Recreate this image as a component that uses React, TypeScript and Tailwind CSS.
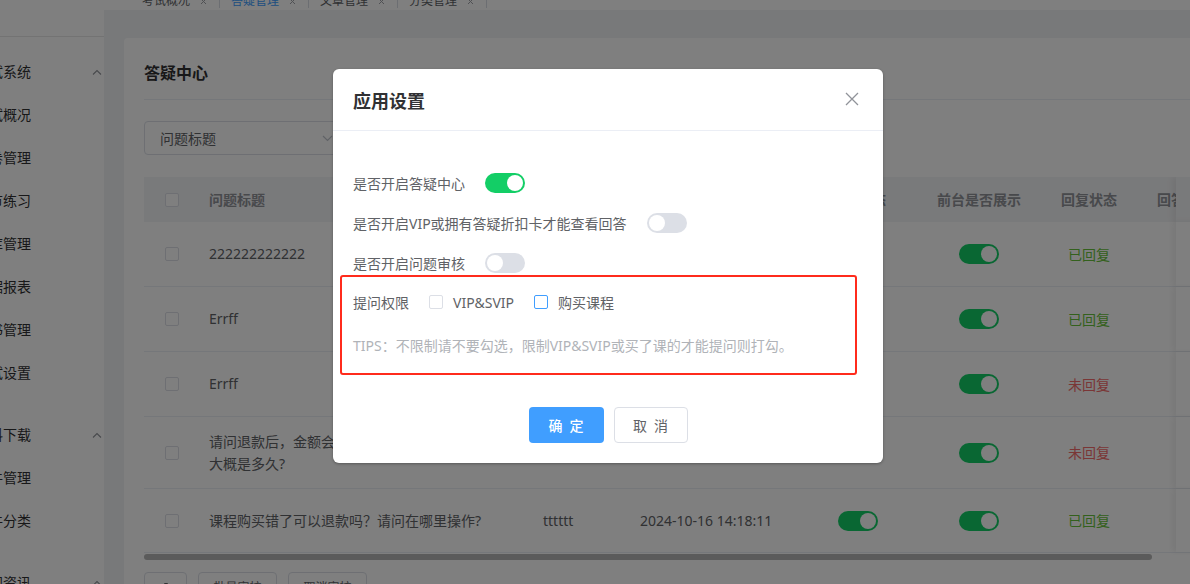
import React from "react";

function Switch({ on }: { on: boolean }) {
  return (
    <span
      className={
        on
          ? "inline-flex h-[20px] w-[40px] shrink-0 items-center justify-end rounded-full bg-[#13ce66] p-[2px]"
          : "inline-flex h-[20px] w-[40px] shrink-0 items-center justify-start rounded-full bg-[#dcdfe6] p-[2px]"
      }
    >
      <span className="h-[16px] w-[16px] rounded-full bg-white" />
    </span>
  );
}

function Box({ blue }: { blue?: boolean }) {
  return (
    <span
      className={
        blue
          ? "inline-block h-[14px] w-[14px] shrink-0 rounded-[2px] border border-[#409eff] bg-white"
          : "inline-block h-[14px] w-[14px] shrink-0 rounded-[2px] border border-[#dcdfe6] bg-white"
      }
    />
  );
}

function ChevronUp() {
  return (
    <svg width="10" height="6" viewBox="0 0 10 6" className="ml-auto mr-[2px]">
      <path d="M1 5.5 L5 1.5 L9 5.5" fill="none" stroke="#909399" strokeWidth="1.1" />
    </svg>
  );
}

function SideItem({ label, chevron }: { label: string; chevron?: boolean }) {
  return (
    <div className="flex h-[43px] items-center">
      <span className="ml-[-25px] whitespace-nowrap text-[14px] text-[#303133]">{label}</span>
      {chevron ? <ChevronUp /> : null}
    </div>
  );
}

function Tab({ label, active }: { label: string; active?: boolean }) {
  return (
    <div className="flex h-[14px] items-center border-r border-[#d8dce5] pl-[11px] pr-[12px]">
      <span
        className={
          active
            ? "w-[48px] whitespace-nowrap text-[12px] leading-[14px] text-[#409eff]"
            : "w-[48px] whitespace-nowrap text-[12px] leading-[14px] text-[#606266]"
        }
      >
        {label}
      </span>
      <svg width="7" height="7" viewBox="0 0 7 7" className="ml-[10px]">
        <path d="M1 1 L6 6 M6 1 L1 6" stroke="#a0a3a8" strokeWidth="1" />
      </svg>
    </div>
  );
}

type Row = {
  title: React.ReactNode;
  who: string;
  time: string;
  replied: boolean;
  h: string;
};

const rows: Row[] = [
  { title: "222222222222", who: "tttttt", time: "2024-10-18 09:12:45", replied: true, h: "h-[65px]" },
  { title: "Errff", who: "tttttt", time: "2024-10-17 16:40:02", replied: true, h: "h-[65px]" },
  { title: "Errff", who: "tttttt", time: "2024-10-17 16:38:27", replied: false, h: "h-[65px]" },
  {
    title: (
      <>
        请问退款后，金额会原路退回吗？退款到账时间
        <br />
        大概是多久?
      </>
    ),
    who: "tttttt",
    time: "2024-10-16 14:20:36",
    replied: false,
    h: "h-[72px]",
  },
  {
    title: "课程购买错了可以退款吗？请问在哪里操作?",
    who: "tttttt",
    time: "2024-10-16 14:18:11",
    replied: true,
    h: "h-[64px]",
  },
];

export default function App() {
  return (
    <div className="relative h-[584px] w-[1190px] overflow-hidden bg-white font-['Noto_Sans','Noto_Sans_CJK_SC',sans-serif]">
      <div className="flex h-full w-full">
        {/* Sidebar */}
        <aside className="h-full w-[104px] shrink-0 overflow-hidden bg-white">
          <div className="h-[37px] border-b border-[#e6e6e6]" />
          <div className="mt-[13px]">
            <SideItem label="考试系统" chevron />
            <SideItem label="考试概况" />
            <SideItem label="试卷管理" />
            <SideItem label="章节练习" />
            <SideItem label="题库管理" />
            <SideItem label="数据报表" />
            <SideItem label="证书管理" />
            <SideItem label="考试设置" />
          </div>
          <div className="mt-[19px]">
            <SideItem label="资料下载" chevron />
            <SideItem label="文件管理" />
            <SideItem label="文件分类" />
          </div>
          <div className="mt-[19px]">
            <SideItem label="新闻资讯" chevron />
          </div>
        </aside>

        {/* Main */}
        <main className="flex min-w-0 flex-1 flex-col bg-[#f0f2f5]">
          <div className="flex h-[10px] shrink-0 items-start bg-white pl-[27px]">
            <div className="mt-[-6px] flex">
              <Tab label="考试概况" />
              <Tab label="答疑管理" active />
              <Tab label="文章管理" />
              <Tab label="分类管理" />
            </div>
          </div>

          <div className="ml-[20px] mt-[28px] w-[1100px] shrink-0 rounded-[4px] bg-white px-[20px] pt-[23px]">
            <div className="border-b border-[#ebeef5] pb-[14px] text-[16px] font-bold leading-[24px] text-[#303133]">
              答疑中心
            </div>

            <div className="mt-[21px] flex h-[34px] w-[200px] items-center justify-between rounded-[4px] border border-[#dcdfe6] pl-[15px] pr-[10px]">
              <span className="text-[14px] text-[#606266]">问题标题</span>
              <svg width="11" height="7" viewBox="0 0 11 7">
                <path d="M1 1 L5.5 5.5 L10 1" fill="none" stroke="#c0c4cc" strokeWidth="1.2" />
              </svg>
            </div>

            {/* Table */}
            <div className="mt-[22px] w-[1060px] overflow-hidden text-[14px]">
              <div className="flex h-[45px] items-center bg-[#f3f4f6] font-bold text-[#909399]">
                <div className="flex w-[65px] shrink-0 pl-[21px]">
                  <Box />
                </div>
                <div className="w-[334px] shrink-0">问题标题</div>
                <div className="w-[97px] shrink-0">提问人</div>
                <div className="w-[158px] shrink-0">提问时间</div>
                <div className="w-[120px] shrink-0 text-center">审核状态</div>
                <div className="w-[122px] shrink-0 text-center">前台是否展示</div>
                <div className="w-[98px] shrink-0 text-center">回复状态</div>
                <div className="w-[38px] shrink-0 overflow-hidden whitespace-nowrap pl-[19px]">回答内容</div>
                <div className="flex h-full w-[140px] shrink-0 items-center bg-[#f3f4f6] pl-[40px] shadow-[-4px_0_6px_rgba(0,0,0,0.06)]">
                  操作
                </div>
              </div>
              {rows.map((r, i) => (
                <div key={i} className={`flex items-center border-b border-[#ebeef5] text-[#606266] ${r.h}`}>
                  <div className="flex w-[65px] shrink-0 pl-[21px]">
                    <Box />
                  </div>
                  <div className="w-[334px] shrink-0 leading-[22px]">{r.title}</div>
                  <div className="w-[97px] shrink-0">{r.who}</div>
                  <div className="w-[158px] shrink-0 whitespace-nowrap">{r.time}</div>
                  <div className="flex w-[120px] shrink-0 justify-center">
                    <Switch on />
                  </div>
                  <div className="flex w-[122px] shrink-0 justify-center">
                    <Switch on />
                  </div>
                  <div
                    className={
                      r.replied
                        ? "w-[98px] shrink-0 text-center text-[#67c23a]"
                        : "w-[98px] shrink-0 text-center text-[#f56c6c]"
                    }
                  >
                    {r.replied ? "已回复" : "未回复"}
                  </div>
                  <div className="w-[38px] shrink-0" />
                  <div className="flex h-full w-[140px] shrink-0 items-center bg-white pl-[40px] text-[#409eff] shadow-[-4px_0_6px_rgba(0,0,0,0.06)]">
                    回复
                  </div>
                </div>
              ))}
              <div className="mt-[1px] flex h-[6px] items-center">
                <div className="h-[6px] w-[1008px] rounded-full bg-[#b6b6b6]" />
              </div>
            </div>

            <div className="mt-[12px] flex gap-[11px]">
              <div className="flex h-[32px] w-[43px] items-center justify-center rounded-[4px] border border-[#dcdfe6]">
                <svg width="12" height="12" viewBox="0 0 12 12">
                  <path d="M1 3 H11 M4.5 3 V1.5 H7.5 V3 M2.5 3 L3 11 H9 L9.5 3" fill="none" stroke="#606266" strokeWidth="1" />
                </svg>
              </div>
              <div className="flex h-[32px] w-[79px] items-center justify-center rounded-[4px] border border-[#dcdfe6] text-[12px] text-[#606266]">
                批量审核
              </div>
              <div className="flex h-[32px] w-[79px] items-center justify-center rounded-[4px] border border-[#dcdfe6] text-[12px] text-[#606266]">
                取消审核
              </div>
            </div>
            <div className="h-[40px]" />
          </div>
        </main>
      </div>

      {/* Overlay + dialog */}
      <div className="absolute inset-0 bg-black/50">
        <div className="relative ml-[333px] mt-[69px] w-[550px] rounded-[6px] bg-white shadow-[0_1px_3px_rgba(0,0,0,0.3)]">
          <div className="relative border-b border-[#ebeef5] px-[20px] pb-[17px] pt-[20px]">
            <div className="text-[18px] font-bold leading-[24px] text-[#303133]">应用设置</div>
            <svg width="14" height="14" viewBox="0 0 14 14" className="absolute right-[24px] top-[23px]">
              <path d="M1 1 L13 13 M13 1 L1 13" stroke="#909399" strokeWidth="1.3" />
            </svg>
          </div>

          <div className="px-[20px] pb-[41px] pt-[32px] text-[14px] text-[#606266]">
            <div className="flex h-[40px] items-center">
              <span>是否开启答疑中心</span>
              <span className="ml-[20px] flex">
                <Switch on />
              </span>
            </div>
            <div className="flex h-[40px] items-center">
              <span>是否开启VIP或拥有答疑折扣卡才能查看回答</span>
              <span className="ml-[20px] flex">
                <Switch on={false} />
              </span>
            </div>
            <div className="flex h-[40px] items-center">
              <span>是否开启问题审核</span>
              <span className="ml-[20px] flex">
                <Switch on={false} />
              </span>
            </div>
            <div className="flex h-[38px] items-center">
              <span>提问权限</span>
              <span className="ml-[20px] flex">
                <Box />
              </span>
              <span className="ml-[10px]">VIP&amp;SVIP</span>
              <span className="ml-[20px] flex">
                <Box blue />
              </span>
              <span className="ml-[10px]">购买课程</span>
            </div>
            <div className="mt-[15px] leading-[20px] text-[#b0b3b8]">
              TIPS：不限制请不要勾选，限制VIP&amp;SVIP或买了课的才能提问则打勾。
            </div>
          </div>

          <div className="flex justify-center gap-[10px] pb-[20px] pt-[10px]">
            <div className="flex h-[36px] w-[75px] items-center justify-center gap-[7px] rounded-[4px] bg-[#409eff] text-[14px] font-medium text-white">
              <span>确</span>
              <span>定</span>
            </div>
            <div className="flex h-[36px] w-[74px] items-center justify-center gap-[7px] rounded-[4px] border border-[#dcdfe6] bg-white text-[14px] text-[#606266]">
              <span>取</span>
              <span>消</span>
            </div>
          </div>

          <div className="pointer-events-none absolute left-[7px] top-[206px] h-[100px] w-[517px] rounded-[3px] border-2 border-[#ff2b1c]" />
        </div>
      </div>
    </div>
  );
}
